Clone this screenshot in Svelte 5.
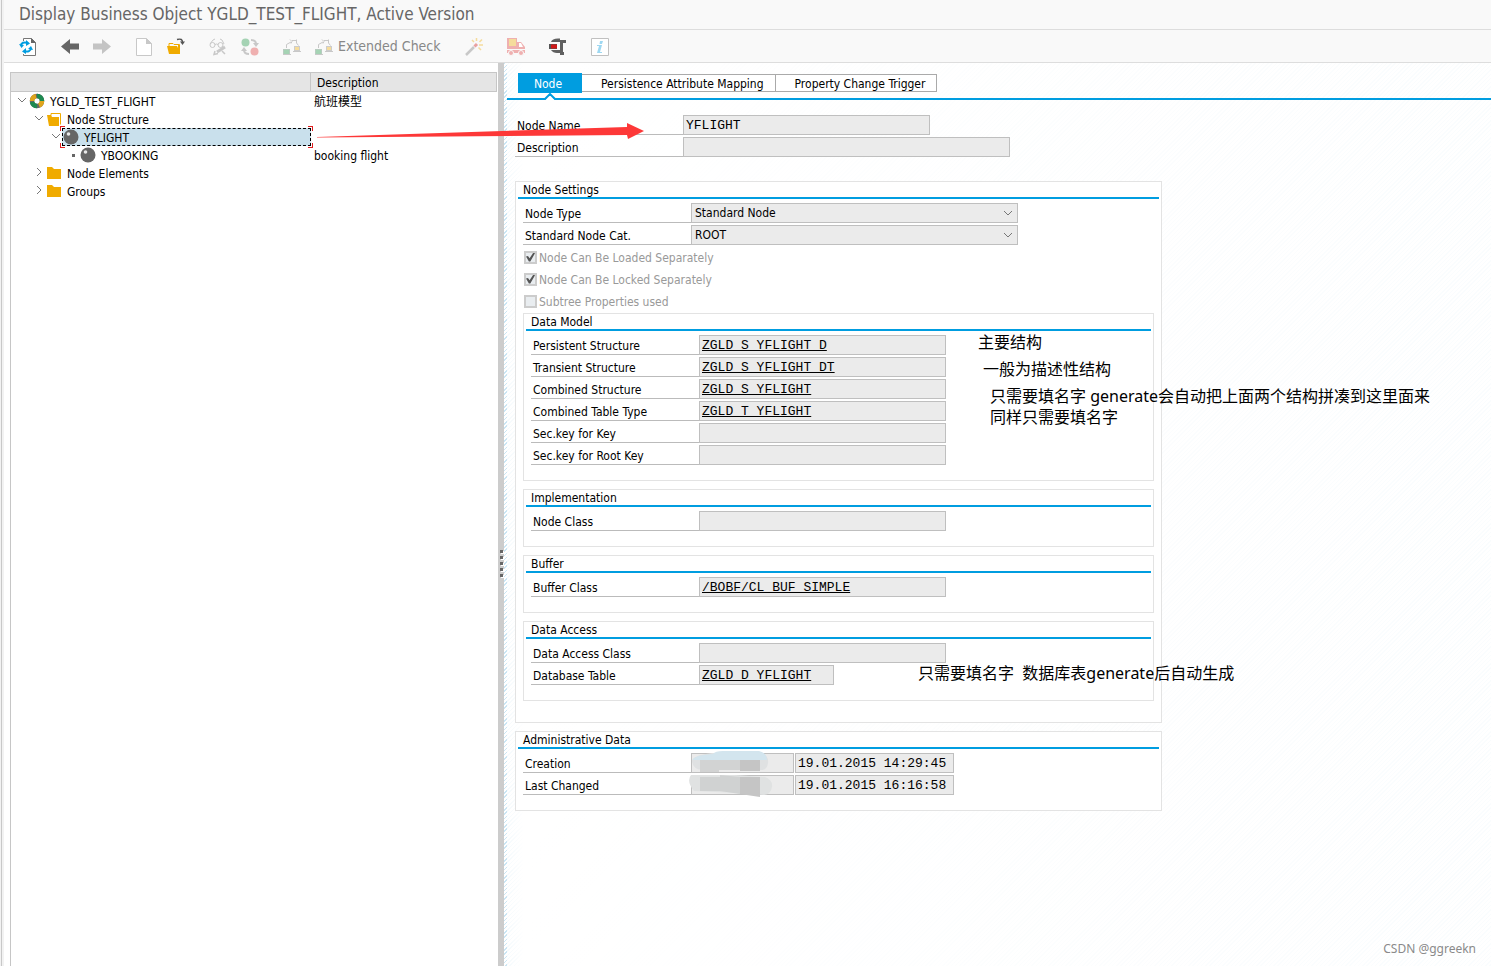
<script lang="ts">
    type Field = {
        id: string;
        label: string;
        value: string;
        size?: 'long' | 'short';
    };

    type TreeRow = {
        level: number;
        icon: 'object' | 'open' | 'node' | 'folder';
        toggle: 'down' | 'right' | 'leaf';
        text: string;
        description: string;
    };

    const rows: TreeRow[] = [
        { level: 0, icon: 'object', toggle: 'down', text: 'YGLD_TEST_FLIGHT', description: '航班模型' },
        { level: 1, icon: 'open', toggle: 'down', text: 'Node Structure', description: '' },
        { level: 2, icon: 'node', toggle: 'down', text: 'YFLIGHT', description: '' },
        { level: 3, icon: 'node', toggle: 'leaf', text: 'YBOOKING', description: 'booking flight' },
        { level: 1, icon: 'folder', toggle: 'right', text: 'Node Elements', description: '' },
        { level: 1, icon: 'folder', toggle: 'right', text: 'Groups', description: '' }
    ];

    const tabs = ['Node', 'Persistence Attribute Mapping', 'Property Change Trigger'];

    const header: Field[] = [
        { id: 'name', label: 'Node Name', value: 'YFLIGHT' },
        { id: 'desc', label: 'Description', value: '', size: 'long' }
    ];

    const settings = [
        { id: 'type', label: 'Node Type', value: 'Standard Node' },
        { id: 'cat', label: 'Standard Node Cat.', value: 'ROOT' }
    ];

    const flags = [
        { id: 'loaded', label: 'Node Can Be Loaded Separately', checked: true },
        { id: 'locked', label: 'Node Can Be Locked Separately', checked: true },
        { id: 'subtree', label: 'Subtree Properties used', checked: false }
    ];

    const groups: { title: string; fields: Field[] }[] = [
        {
            title: 'Data Model',
            fields: [
                { id: 'persistent', label: 'Persistent Structure', value: 'ZGLD_S_YFLIGHT_D' },
                { id: 'transient', label: 'Transient Structure', value: 'ZGLD_S_YFLIGHT_DT' },
                { id: 'combined', label: 'Combined Structure', value: 'ZGLD_S_YFLIGHT' },
                { id: 'table-type', label: 'Combined Table Type', value: 'ZGLD_T_YFLIGHT' },
                { id: 'key', label: 'Sec.key for Key', value: '' },
                { id: 'root-key', label: 'Sec.key for Root Key', value: '' }
            ]
        },
        {
            title: 'Implementation',
            fields: [{ id: 'node-class', label: 'Node Class', value: '' }]
        },
        {
            title: 'Buffer',
            fields: [{ id: 'buffer', label: 'Buffer Class', value: '/BOBF/CL_BUF_SIMPLE' }]
        },
        {
            title: 'Data Access',
            fields: [
                { id: 'access', label: 'Data Access Class', value: '' },
                { id: 'db', label: 'Database Table', value: 'ZGLD_D_YFLIGHT', size: 'short' }
            ]
        }
    ];

    const admin = [
        { id: 'created', label: 'Creation', stamp: '19.01.2015 14:29:45' },
        { id: 'changed', label: 'Last Changed', stamp: '19.01.2015 16:16:58' }
    ];

    let selected = $state('YFLIGHT');
    let activeTab = $state('Node');
</script>

{#snippet fieldRow(field: Field, link: boolean)}
    <div class="row">
        <label for={field.id}>{field.label}</label>
        <input
            class="field {field.size ?? ''}"
            class:link
            id={field.id}
            type="text"
            value={field.value}
            readonly
        />
    </div>
{/snippet}

{#snippet hierarchy()}
    <svg viewBox="0 0 18 18">
        <path d="M3.5 10V6.5L8 4M7 1.500l2 2-1 2M9 2.500h4.500M13.500 1.500V5l2 2.500" fill="none" stroke="#c8c8c8" />
        <rect x="0.5" y="11.5" width="6" height="5" fill="#a5d3b4" stroke="#b8ccc0" />
        <rect x="11.5" y="8.5" width="5" height="4" fill="#f5dc9c" stroke="#ccc" />
        <path d="M0 16.5h8M10 13.500h8" stroke="#c8c8c8" />
    </svg>
{/snippet}

<div class="window">
    <h1>Display Business Object YGLD_TEST_FLIGHT, Active Version</h1>

    <div class="toolbar">
        <div class="tools">
            <button aria-label="Other object">
                <svg viewBox="0 0 18 18">
                    <path d="M4.500 3V.500h8l4 4v13h-12V16" fill="#fff" stroke="#777" />
                    <path d="M12 0l5 5h-5z" fill="#666" />
                    <path d="M2 7.500C2 5 5 3.500 9 5M12 10c0 3-3 4.500-7 3" fill="none" stroke="#009de0" stroke-width="2" />
                    <path d="M7 2l4 3.500L7 8zM7 10l-4 3.500L7 16zM0 6l2.500 4L5 7zM14 12l-2-4-3 3z" fill="#009de0" />
                </svg>
            </button>
        </div>
        <div class="tools">
            <button aria-label="Back">
                <svg viewBox="0 0 18 18"><path d="M0 8.500L9 1v4.500h9v6H9V16z" fill="#666" /></svg>
            </button>
            <button aria-label="Forward">
                <svg viewBox="0 0 18 18"><path d="M18 8.500L9 1v4.500H0v6h9V16z" fill="#c4c4c4" /></svg>
            </button>
        </div>
        <div class="tools">
            <button aria-label="Create">
                <svg viewBox="0 0 18 18">
                    <path d="M1.500 .5h10l5 5v12h-15z" fill="#fff" stroke="#c8c8c8" />
                    <path d="M11 0l6 6h-6z" fill="#c8c8c8" />
                </svg>
            </button>
            <button aria-label="Open">
                <svg viewBox="0 0 18 18">
                    <path d="M2 8V5.500h4l1 1h5.500V9" fill="none" stroke="#f0ab00" />
                    <path d="M0 8h10l1 2V7h2v9H2z" fill="#f0ab00" />
                    <path d="M10 1.500c4-1 5.500 0 5.500 3" fill="none" stroke="#555" stroke-width="1.500" />
                    <path d="M13 3.500h5L15.500 7z" fill="#555" />
                </svg>
            </button>
        </div>
        <div class="tools">
            <button aria-label="Display or change">
                <svg viewBox="0 0 18 18" fill="none" stroke="#c8c8c8">
                    <path d="M1 6l3-4 2-1M15 6l-2-4-2-1" />
                    <circle cx="3.500" cy="7" r="2.500" />
                    <circle cx="11.500" cy="7" r="2.500" />
                    <path d="M6 6.500q1.500-1 3 0" />
                    <path d="M16 9l-8 5" stroke-width="3" />
                    <path d="M6 13l-1 3.500 4-1M13 13l3 3" stroke-width="1.500" />
                </svg>
            </button>
            <button aria-label="Activate">
                <svg viewBox="0 0 18 18">
                    <circle cx="4.500" cy="4.500" r="4" fill="#a5d3b4" />
                    <circle cx="13.500" cy="13.500" r="4" fill="#efb0b0" />
                    <path d="M10 2c3 0 5 1 5 4M8 16c-3 0-5-1-5-4" fill="none" stroke="#c8c8c8" stroke-width="2" />
                    <path d="M12 5h6l-3 4zM0 13h6L3 9z" fill="#c8c8c8" />
                </svg>
            </button>
        </div>
        <div class="tools">
            <button aria-label="Check">{@render hierarchy()}</button>
            <button class="wide">{@render hierarchy()}Extended Check</button>
        </div>
        <div class="tools">
            <button aria-label="Generate">
                <svg viewBox="0 0 18 18" fill="none">
                    <path d="M1 17l8-8" stroke="#c8c8c8" stroke-width="2.500" />
                    <path d="M9.500 8.500l2.500-2.500" stroke="#e9a0a0" stroke-width="3" />
                    <path d="M11.500 0v3M7 2l2 2M14.500 4L17 1.500M14 7h4M13.500 9.500l2.500 2.500" stroke="#f5dc9c" stroke-width="1.500" />
                </svg>
            </button>
        </div>
        <div class="tools">
            <button aria-label="Transport">
                <svg viewBox="0 0 18 18">
                    <path d="M0 0h10v4h4l4 5v6H0z" fill="#efb0b0" />
                    <path d="M2 1h7v7H2z" fill="#f5dc9c" />
                    <path d="M12 5h2l2 4h-4z" fill="#fff" />
                    <path d="M0 11.500h18" stroke="#f9f9f9" />
                    <circle cx="4" cy="15" r="2.500" fill="#efb0b0" stroke="#f9f9f9" />
                    <circle cx="14" cy="15" r="2.500" fill="#efb0b0" stroke="#f9f9f9" />
                </svg>
            </button>
        </div>
        <div class="tools">
            <button aria-label="Where used">
                <svg viewBox="0 0 18 18">
                    <path d="M2 4q1-3.500 7-3.500h2V2h6v3h-3v9h1v3h-4v-2H8q-4 0-6-3h9V4z" fill="#606060" />
                    <path d="M0 6h8v5H0z" fill="#555" />
                    <path d="M2 6.500h6v4H2z" fill="#d01818" />
                </svg>
            </button>
        </div>
        <div class="tools">
            <button aria-label="Information">
                <svg viewBox="0 0 18 18">
                    <path d="M.5 .5h17v17H.5z" fill="#fff" stroke="#c0c0c0" />
                    <path d="M9 3h3l-1 3H8.500zM6 7h5l-2 7h2v1H6l2-7H6z" fill="#9ed8f2" />
                </svg>
            </button>
        </div>
    </div>

    <div class="body">
        <aside>
            <table>
                <thead>
                    <tr>
                        <th aria-label="Object"></th>
                        <th>Description</th>
                    </tr>
                </thead>
                <tbody>
                    {#each rows as row (row.text)}
                        <tr onclick={() => (selected = row.text)}>
                            <td>
                                <div class="branch" style:padding-left="{row.level * 17}px">
                                    <svg class="toggle" viewBox="0 0 17 18">
                                        {#if row.toggle === 'down'}
                                            <path d="M7 6l4 4 4-4" />
                                        {:else if row.toggle === 'right'}
                                            <path d="M9 4l4 4-4 4" />
                                        {:else}
                                            <rect x="10" y="8" width="3" height="3" fill="#666" stroke="none" />
                                        {/if}
                                    </svg>
                                    <div class="item" class:selected={selected === row.text}>
                                        <svg class="icon" viewBox="0 0 16 16">
                                            {#if row.icon === 'object'}
                                                <g fill="none" stroke-width="4.500">
                                                    <circle cx="8" cy="8" r="5" stroke="#666" />
                                                    <path d="M8 3a5 5 0 0 1 5 5" stroke="#1d8a50" />
                                                    <path d="M13 8a5 5 0 0 1-3 4.500" stroke="#e0a51c" />
                                                    <path d="M8 13a5 5 0 0 1-5-4" stroke="#1d8a50" />
                                                    <path d="M3 8a5 5 0 0 1 4-5" stroke="#e0a51c" />
                                                </g>
                                            {:else if row.icon === 'open'}
                                                <path d="M5 4.500V2.500h9.500v11" fill="none" stroke="#f0ab00" />
                                                <path d="M1 4h4l1 2h7v9H3z" fill="#f0ab00" />
                                            {:else if row.icon === 'node'}
                                                <circle cx="8" cy="8" r="7.500" fill="#666" />
                                                <circle cx="5.500" cy="5" r="1.800" fill="#e8e8e8" />
                                            {:else}
                                                <path d="M1 2h5l2 2h7v10H1z" fill="#f0ab00" />
                                            {/if}
                                        </svg>
                                        <span>{row.text}</span>
                                        {#if selected === row.text}
                                            <i class="corners"></i>
                                        {/if}
                                    </div>
                                </div>
                            </td>
                            <td class="description">{row.description}</td>
                        </tr>
                    {/each}
                </tbody>
            </table>
        </aside>

        <div class="splitter">
            {#each [1, 2, 3, 4, 5] as dot (dot)}
                <i></i>
            {/each}
        </div>

        <main>
            <div class="tabs" role="tablist">
                {#each tabs as tab (tab)}
                    <button
                        role="tab"
                        aria-selected={activeTab === tab}
                        class:active={activeTab === tab}
                        onclick={() => (activeTab = tab)}
                    >
                        {tab}
                        {#if activeTab === tab}
                            <svg class="notch" viewBox="0 0 12 7">
                                <path d="M1 7l5-5 5 5z" fill="#fff" />
                                <path d="M0 6h1l5-5 5 5h1" fill="none" stroke="#009de0" stroke-width="2" />
                            </svg>
                        {/if}
                    </button>
                {/each}
            </div>

            <div class="content">
                <div class="top">
                    {#each header as field (field.id)}
                        {@render fieldRow(field, false)}
                    {/each}
                </div>

                <section>
                    <h2>Node Settings</h2>
                    {#each settings as item (item.id)}
                        <div class="row">
                            <label for={item.id}>{item.label}</label>
                            <div class="select">
                                <select class="field" id={item.id}>
                                    <option>{item.value}</option>
                                </select>
                                <svg viewBox="0 0 10 6"><path d="M1 1l4 4 4-4" /></svg>
                            </div>
                        </div>
                    {/each}
                    {#each flags as flag (flag.id)}
                        <div class="flag">
                            <input type="checkbox" id={flag.id} checked={flag.checked} disabled />
                            <label for={flag.id}>{flag.label}</label>
                        </div>
                    {/each}

                    {#each groups as group (group.title)}
                        <section>
                            <h2>{group.title}</h2>
                            {#each group.fields as field (field.id)}
                                {@render fieldRow(field, true)}
                            {/each}
                        </section>
                    {/each}
                </section>

                <section>
                    <h2>Administrative Data</h2>
                    {#each admin as entry (entry.id)}
                        <div class="row">
                            <label for={entry.id}>{entry.label}</label>
                            <div class="user">
                                <input class="field" id={entry.id} type="text" readonly />
                                <svg class="smudge" viewBox="0 0 84 24">
                                    {#if entry.id === 'created'}
                                        <path d="M3 9q3-5 20-7h48q9 2 8 10t-8 7H13q-10-1-10-10" fill="#dfe1e2" />
                                        <path d="M11 9h60v10H30v2H11z" fill="#d2d3d3" />
                                        <path d="M51 9h20v11H51z" fill="#c5c5c5" />
                                        <path d="M4 8q3-4 20-5 2-3 10-3h36q8 2 8 9H4" fill="#d3e5ee" />
                                    {:else}
                                        <path d="M2 2h44l30 2q8 3 7 10-1 7-8 8l-28-2L5 18Q-3 8 2 2" fill="#e0e2e2" />
                                        <path d="M11 4h20V2l20 2v17l-20-3H11z" fill="#d0d2d2" />
                                        <path d="M51 4h20v20l-20-3z" fill="#c5c5c5" />
                                    {/if}
                                </svg>
                            </div>
                            <input class="field stamp" type="text" aria-label="{entry.label} time" value={entry.stamp} readonly />
                        </div>
                    {/each}
                </section>
            </div>
        </main>
    </div>

    <!-- annotations lying over the form -->
    <svg class="arrow" viewBox="0 0 328 18">
        <path d="M1 14L311 4V0l17 8-16 8-1-4L1 14.500z" fill="#fd3838" />
    </svg>
    <p class="note main-structure">主要结构</p>
    <p class="note transient-structure">一般为描述性结构</p>
    <p class="note combined-structure">只需要填名字 generate会自动把上面两个结构拼凑到这里面来<br />同样只需要填名字</p>
    <p class="note database-table">只需要填名字  数据库表generate后自动生成</p>
    <p class="watermark">CSDN @ggreekn</p>
</div>

<style>
    :global(body) {
        margin: 0;
    }

    .window {
        position: relative;
        display: flex;
        flex-direction: column;
        box-sizing: border-box;
        min-height: 100vh;
        padding-left: 4px;
        background: linear-gradient(90deg, #f2f2f2 1px, #c8c8c8 1px 2px, #f2f2f2 2px 4px, #fff 4px);
        color: #000;
        font: 12px/18px 'DejaVu Sans Condensed', 'Noto Sans', 'Noto Sans CJK SC', sans-serif;
        overflow: hidden;
    }

    h1 {
        margin: 0;
        padding-left: 15px;
        border-bottom: 1px solid #ddd;
        background: #f9f9f9;
        color: #666;
        font-size: 17px;
        font-weight: 400;
        line-height: 29px;
    }

    button {
        display: flex;
        align-items: center;
        padding: 0;
        border: 0;
        background: none;
        font: inherit;
        cursor: pointer;
    }

    .toolbar {
        display: flex;
        align-items: center;
        gap: 24px;
        height: 32px;
        padding-left: 15px;
        border-bottom: 1px solid #ddd;
        background: #f9f9f9;
    }

    .tools {
        display: flex;
        gap: 14px;
    }

    .tools :global(svg) {
        width: 18px;
        height: 18px;
        margin-top: 2px;
    }

    .tools .wide {
        gap: 5px;
        color: #888;
        font-size: 14px;
        white-space: nowrap;
    }

    .body {
        display: flex;
        flex: 1;
    }

    aside {
        flex: none;
        box-sizing: border-box;
        width: 487px;
        margin: 9px 1px 0 6px;
        border-left: 1px solid #c6c6c6;
    }

    table {
        width: 100%;
        border-spacing: 0;
        table-layout: fixed;
    }

    th {
        box-sizing: border-box;
        height: 20px;
        padding: 2px 6px 0;
        border: solid #c6c6c6;
        border-width: 1px 1px 1px 0;
        background: #e5e5e5;
        font-weight: 400;
        line-height: 16px;
        text-align: left;
    }

    th:first-child {
        width: 300px;
    }

    td {
        box-sizing: border-box;
        height: 18px;
        padding: 0;
    }

    td.description {
        padding: 2px 0 0 3px;
        line-height: 16px;
    }

    .branch {
        display: flex;
        height: 18px;
    }

    .toggle {
        flex: none;
        width: 17px;
        height: 18px;
        fill: none;
        stroke: #777;
    }

    .item {
        position: relative;
        display: flex;
        flex: 1;
        align-items: center;
        gap: 5px;
        box-sizing: border-box;
        border: 1px solid transparent;
        line-height: 16px;
    }

    .item span {
        padding-top: 2px;
    }

    .item.selected {
        border: 1px dashed #000;
        background: #c9e0ec;
    }

    .icon {
        width: 16px;
        height: 16px;
    }

    /* red marks on the four corners of the cursor cell */
    .corners {
        position: absolute;
        inset: -3px;
        background:
            linear-gradient(#e02020 0 0) 0 0 / 5px 1px,
            linear-gradient(#e02020 0 0) 0 0 / 1px 5px,
            linear-gradient(#e02020 0 0) 100% 0 / 5px 1px,
            linear-gradient(#e02020 0 0) 100% 0 / 1px 5px,
            linear-gradient(#e02020 0 0) 0 100% / 5px 1px,
            linear-gradient(#e02020 0 0) 0 100% / 1px 5px,
            linear-gradient(#e02020 0 0) 100% 100% / 5px 1px,
            linear-gradient(#e02020 0 0) 100% 100% / 1px 5px;
        background-repeat: no-repeat;
    }

    .splitter {
        display: flex;
        flex: none;
        flex-direction: column;
        align-items: center;
        gap: 3px;
        box-sizing: border-box;
        width: 6px;
        padding-top: 487px;
        background: #ccc;
        cursor: col-resize;
    }

    .splitter i {
        width: 3px;
        height: 3px;
        background: #666;
        box-shadow: 1px 1px #fff;
    }

    main {
        flex: 1;
        min-width: 0;
        padding: 10px 0 24px 3px;
        background:
            linear-gradient(90deg, transparent 3px, rgba(255, 255, 255, 0.8) 3px, #fff 20px, rgba(255, 255, 255, 0.9)),
            repeating-linear-gradient(135deg, #cbe6f4 0 1px, #fff 1px 3px);
    }

    .tabs {
        display: flex;
        align-items: flex-end;
        height: 25px;
        padding-left: 11px;
        border-bottom: 2px solid #009de0;
    }

    .tabs button {
        box-sizing: border-box;
        height: 18px;
        margin-bottom: 6px;
        padding: 1px 11px 0 19px;
        border: 1px solid #aaa;
        border-left-width: 0;
        background: #fff;
        color: #000;
        white-space: nowrap;
    }

    .tabs .active {
        position: relative;
        justify-content: center;
        width: 64px;
        height: 20px;
        margin-bottom: 5px;
        padding: 2px 4px 0 0;
        border: 0;
        background: #009de0;
        color: #fff;
    }

    .notch {
        position: absolute;
        top: 100%;
        left: 26px;
        width: 12px;
        height: 7px;
    }

    .content {
        max-width: 647px;
        padding: 15px 8px 0;
    }

    .top {
        margin-bottom: 24px;
    }

    .row {
        display: flex;
        height: 20px;
        margin-bottom: 2px;
    }

    .row label {
        flex: none;
        box-sizing: border-box;
        width: 168px;
        padding: 3px 0 0 2px;
        border-bottom: 1px solid #bbb;
        line-height: 16px;
    }

    .field {
        box-sizing: border-box;
        width: 247px;
        height: 20px;
        margin: 0;
        padding: 0 2px;
        border: 1px solid #bfbfbf;
        border-radius: 0;
        outline: 0;
        background: #ebebeb;
        color: #000;
        font: 13px/18px 'Liberation Mono', monospace;
    }

    .field.long {
        width: 327px;
    }

    .field.short {
        width: 135px;
    }

    .field.link {
        text-decoration: underline;
    }

    .field.stamp {
        width: 159px;
        margin-left: 1px;
    }

    .select {
        position: relative;
        width: 327px;
    }

    .select .field {
        width: 100%;
        padding: 0 20px 0 3px;
        appearance: none;
        font: inherit;
    }

    .select svg {
        position: absolute;
        top: 7px;
        right: 5px;
        width: 10px;
        height: 6px;
        fill: none;
        stroke: #777;
        pointer-events: none;
    }

    section {
        margin-bottom: 8px;
        padding: 0 7px 13px;
        border: 1px solid #e3e3e3;
        background: #fff;
    }

    h2 {
        margin: 0 -5px 4px;
        padding: 1px 0 0 5px;
        border-bottom: 2px solid #009de0;
        font-size: 12px;
        font-weight: 400;
        line-height: 14px;
    }

    .flag {
        display: flex;
        align-items: center;
        gap: 2px;
        height: 20px;
        margin: 0 0 2px 1px;
        color: #999;
    }

    .flag label {
        padding-top: 1px;
    }

    .flag input {
        box-sizing: border-box;
        width: 13px;
        height: 13px;
        margin: 0;
        border: 2px solid #ccc;
        appearance: none;
        background: #e9edf0;
    }

    .flag input:checked::after {
        content: '';
        display: block;
        width: 9px;
        height: 9px;
        background: #555;
        clip-path: polygon(0 45%, 22% 40%, 40% 65%, 82% 0, 100% 8%, 48% 100%, 32% 100%);
    }

    .user {
        position: relative;
    }

    .user .field {
        width: 103px;
    }

    .smudge {
        position: absolute;
        top: -2px;
        left: -2px;
        width: 84px;
        height: 24px;
    }

    .arrow {
        position: absolute;
        top: 123px;
        left: 316px;
        width: 328px;
        height: 18px;
    }

    .note {
        position: absolute;
        margin: 0;
        font: 16px/21px 'Noto Sans', 'Noto Sans CJK SC', sans-serif;
        white-space: pre;
    }

    .main-structure {
        top: 332px;
        left: 978px;
    }

    .transient-structure {
        top: 359px;
        left: 983px;
    }

    .combined-structure {
        top: 386px;
        left: 990px;
    }

    .database-table {
        top: 663px;
        left: 918px;
    }

    .watermark {
        position: absolute;
        right: 15px;
        bottom: 8px;
        margin: 0;
        color: #8a8a8a;
        font: 12px/18px 'Noto Sans', sans-serif;
    }
</style>
